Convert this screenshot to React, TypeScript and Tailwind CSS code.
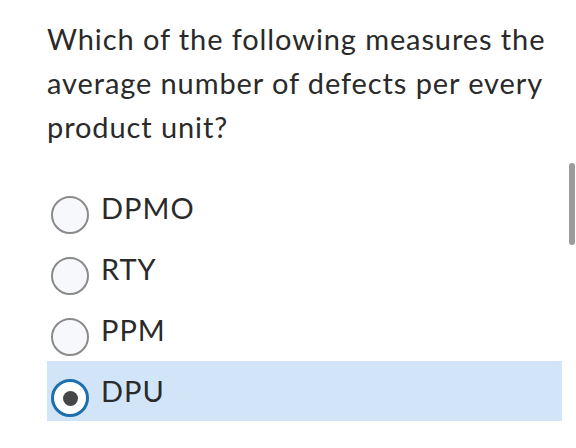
import React from "react";

const options = [
  { label: "DPMO", selected: false },
  { label: "RTY", selected: false },
  { label: "PPM", selected: false },
  { label: "DPU", selected: true },
];

function Radio({ selected }: { selected: boolean }) {
  if (selected) {
    return (
      <span className="mt-[6px] flex h-[38px] w-[38px] shrink-0 items-center justify-center rounded-full border-[3px] border-[#1d6fae] bg-white">
        <span className="h-[15px] w-[15px] rounded-full bg-[#444648]" />
      </span>
    );
  }
  return (
    <span className="mt-[6px] block h-[38px] w-[38px] shrink-0 rounded-full border-2 border-[#8a8a8a] bg-[#f6f8fc]" />
  );
}

export default function App() {
  return (
    <div
      className="relative h-[448px] w-[576px] overflow-hidden bg-white text-[#2a2a2a]"
      style={{ fontFamily: "Lato, 'Open Sans', sans-serif" }}
    >
      <div className="pl-[47px] pt-[17px]">
        <p className="w-[515px] text-[29px] leading-[44px] tracking-[0.9px]">
          Which of the following measures the average number of defects per every product unit?
        </p>
      </div>
      <div className="mt-[29px] flex w-[562px] flex-col pl-[47px]">
        {options.map((o, i) => (
          <label
            key={o.label}
            className={`flex items-start gap-[12px] pl-[4px] pt-[12px] ${
              i === options.length - 1 ? "h-[60px] bg-[#d2e5f8]" : "h-[61px]"
            }`}
          >
            <Radio selected={o.selected} />
            <span className="text-[29px] leading-[36px] tracking-[1px]">{o.label}</span>
          </label>
        ))}
      </div>
      <div className="absolute left-[569px] top-[163px] h-[82px] w-[6px] rounded-full bg-[#9c9c9c]" />
    </div>
  );
}
